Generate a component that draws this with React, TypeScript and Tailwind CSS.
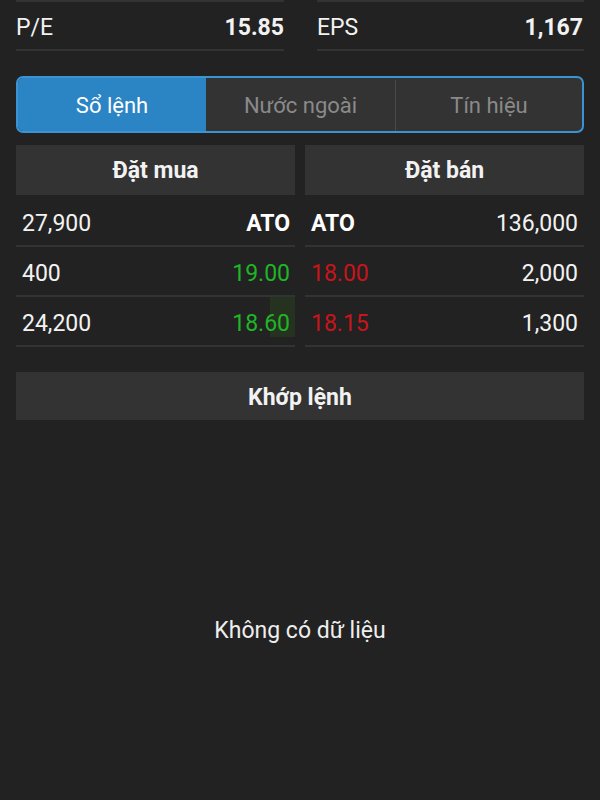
import React from "react";

const buys = [
    { vol: "27,900", price: "ATO", tone: "ato" },
    { vol: "400", price: "19.00", tone: "up" },
    { vol: "24,200", price: "18.60", tone: "up", hl: true },
];

const sells = [
    { price: "ATO", vol: "136,000", tone: "ato" },
    { price: "18.00", vol: "2,000", tone: "down" },
    { price: "18.15", vol: "1,300", tone: "down" },
];

function priceClass(tone: string) {
    if (tone === "up") return "text-[#1fb526]";
    if (tone === "down") return "text-[#c8141a]";
    return "text-white font-bold";
}

export default function App() {
    return (
        <div
            className="w-[600px] h-[800px] bg-[#222222] text-[#f2f2f2] overflow-hidden flex flex-col"
            style={{ fontFamily: "Roboto, 'Noto Sans', sans-serif" }}
        >
            {/* stats rows */}
            <div className="flex px-4 gap-[33px]">
                <div className="w-[268px]">
                    <div className="h-[2px] bg-[#333333]" />
                    <div className="h-[49px] pt-[4px] flex items-center justify-between border-b-2 border-[#333333] text-[23px] leading-none">
                        <span>P/E</span>
                        <span className="font-bold">15.85</span>
                    </div>
                </div>
                <div className="flex-1">
                    <div className="h-[2px] bg-[#333333]" />
                    <div className="h-[49px] pt-[4px] flex items-center justify-between border-b-2 border-[#333333] text-[23px] leading-none pr-px">
                        <span>EPS</span>
                        <span className="font-bold">1,167</span>
                    </div>
                </div>
            </div>

            {/* tabs */}
            <div className="mx-4 mt-[25px] h-[57px] pt-[2px] rounded-[7px] border-2 border-[#3b93d3] flex overflow-hidden text-[22px] bg-[#333333]">
                <div className="w-[188px] -mt-[2px] bg-[#2b84c4] flex items-center justify-center pt-[2px] text-white">Sổ lệnh</div>
                <div className="w-[190px] flex items-center justify-center text-[#8a8a8a] border-r border-[#4a4a4a]">Nước ngoài</div>
                <div className="flex-1 flex items-center justify-center text-[#8a8a8a]">Tín hiệu</div>
            </div>

            {/* order book */}
            <div className="mx-4 mt-3 flex gap-[10px]">
                <div className="w-[279px]">
                    <div className="h-[50px] pt-[3px] bg-[#333333] flex items-center justify-center font-bold text-[23px]">Đặt mua</div>
                    <div className="pt-[2px]">
                        {buys.map((r) => (
                            <div key={r.vol} className="h-[50px] pt-[6px] flex items-center justify-between border-b-2 border-[#333333] text-[23px] pl-[6px] pr-[5px]">
                                <span>{r.vol}</span>
                                <span className="relative">
                                    {r.hl && <span className="absolute -right-[5px] -top-[10px] w-[25px] h-[40px] bg-[#24321f]" />}
                                    <span className={`relative ${priceClass(r.tone)}`}>{r.price}</span>
                                </span>
                            </div>
                        ))}
                    </div>
                </div>
                <div className="flex-1">
                    <div className="h-[50px] pt-[3px] bg-[#333333] flex items-center justify-center font-bold text-[23px]">Đặt bán</div>
                    <div className="pt-[2px]">
                        {sells.map((r) => (
                            <div key={r.vol} className="h-[50px] pt-[6px] flex items-center justify-between border-b-2 border-[#333333] text-[23px] pl-[6px] pr-[6px]">
                                <span className={priceClass(r.tone)}>{r.price}</span>
                                <span>{r.vol}</span>
                            </div>
                        ))}
                    </div>
                </div>
            </div>

            {/* matched orders */}
            <div className="mx-4 mt-[25px] h-[48px] pt-[4px] bg-[#333333] flex items-center justify-center font-bold text-[23px]">Khớp lệnh</div>

            <div className="flex-1 flex items-start justify-center pt-[196px] text-[23px] leading-[30px] text-[#eeeeee]">
                Không có dữ liệu
            </div>
        </div>
    );
}
